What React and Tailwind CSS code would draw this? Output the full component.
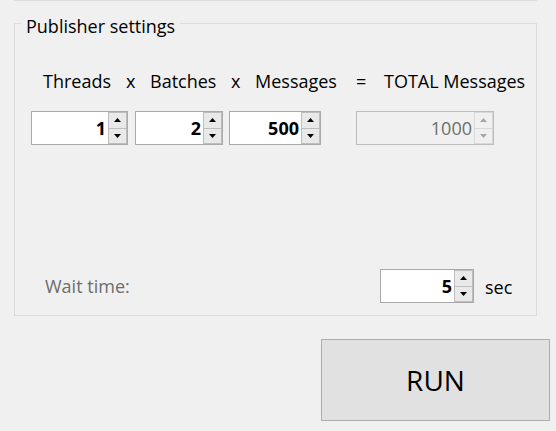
import React from "react";

function Arrow({ up, color }) {
  return (
    <svg width="7" height="4" viewBox="0 0 7 4" className="block">
      {up ? (
        <polygon points="0,4 3.5,0 7,4" fill={color} />
      ) : (
        <polygon points="0,0 7,0 3.5,4" fill={color} />
      )}
    </svg>
  );
}

function Spinner({ className, value, disabled }) {
  const box = disabled
    ? "border-[#bcbcbc] bg-[#f0f0f0]"
    : "border-[#a9a9a9] bg-white";
  const btn = disabled
    ? "border-[#d9d9d9] bg-[#f0f0f0]"
    : "border-[#bdbdbd] bg-[#e9e9e9]";
  const arrow = disabled ? "#a6a6a6" : "#000000";
  return (
    <div className={`flex h-[34px] border ${box} ${className}`}>
      <div
        className={`flex-1 text-right pr-[2px] pt-px text-[18px] leading-[31px] ${
          disabled ? "font-normal text-[#6d6d6d]" : "font-bold text-black"
        }`}
      >
        {value}
      </div>
      <div className="flex flex-col w-[19px] h-full">
        <div className={`flex-1 flex items-center justify-center border ${btn}`}>
          <Arrow up color={arrow} />
        </div>
        <div className={`flex-1 flex items-center justify-center border border-t-0 ${btn}`}>
          <Arrow color={arrow} />
        </div>
      </div>
    </div>
  );
}

export default function App() {
  return (
    <div className="w-[556px] h-[431px] bg-[#f0f0f0] overflow-hidden font-['Open_Sans',sans-serif] text-black">
      <div className="ml-[14px] w-[523px] h-px bg-[#dcdcdc]" />
      <div className="relative ml-[14px] mt-[22px] w-[523px] h-[293px] border border-[#dcdcdc]">
        <span className="absolute left-[6px] top-[-10px] bg-[#f0f0f0] px-[5px] text-[18px] leading-[24px]">
          Publisher settings
        </span>

        <div className="flex ml-[28px] mt-[45px] text-[18px] leading-[24px]">
          <span className="w-[83px]">Threads</span>
          <span className="w-[24px]">x</span>
          <span className="w-[81px]">Batches</span>
          <span className="w-[24px]">x</span>
          <span className="w-[101px]">Messages</span>
          <span className="w-[28px]">=</span>
          <span>TOTAL Messages</span>
        </div>

        <div className="flex mt-[18px] ml-[16px]">
          <Spinner className="w-[97px]" value="1" />
          <Spinner className="w-[88px] ml-[7px]" value="2" />
          <Spinner className="w-[92px] ml-[6px]" value="500" />
          <Spinner className="w-[138px] ml-[35px]" value="1000" disabled />
        </div>

        <div className="flex items-start mt-[124px] text-[18px] leading-[24px]">
          <span className="w-[335px] ml-[30px] mt-[5px] text-[#6d6d6d]">Wait time:</span>
          <Spinner className="w-[94px]" value="5" />
          <span className="ml-[11px] mt-[6px]">sec</span>
        </div>
      </div>

      <button className="block ml-[321px] mt-[23px] w-[229px] h-[82px] border border-[#adadad] bg-[#e1e1e1] text-[28px] leading-none text-black">
        RUN
      </button>
    </div>
  );
}
